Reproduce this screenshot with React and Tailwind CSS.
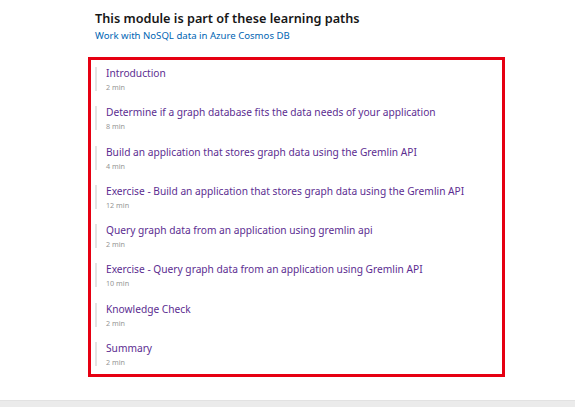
import React from 'react';

const modules = [
  { title: 'Introduction', time: '2 min' },
  { title: 'Determine if a graph database fits the data needs of your application', time: '8 min' },
  { title: 'Build an application that stores graph data using the Gremlin API', time: '4 min' },
  { title: 'Exercise - Build an application that stores graph data using the Gremlin API', time: '12 min' },
  { title: 'Query graph data from an application using gremlin api', time: '2 min' },
  { title: 'Exercise - Query graph data from an application using Gremlin API', time: '10 min' },
  { title: 'Knowledge Check', time: '2 min' },
  { title: 'Summary', time: '2 min' },
];

const App = () => {
  return (
    <div className="h-[407px] w-full bg-white flex flex-col font-['Noto_Sans',sans-serif]">
      <div className="flex-1">
        {/* Learning path header */}
        <div className="ml-[95px] pt-[10px]">
          <h2 className="text-[12.7px] leading-[17px] font-semibold text-[#171717]">
            This module is part of these learning paths
          </h2>
          <a className="block mt-[2px] text-[9.6px] leading-[13px] text-[#0065b3]">
            Work with NoSQL data in Azure Cosmos DB
          </a>
        </div>

        {/* Units list */}
        <div className="ml-[88px] mt-[15px] w-[417px] h-[320px] border-[3px] border-[#e60012] pt-[7px] pl-[4px] flex flex-col gap-[15.3px]">
          {modules.map((m) => (
            <div key={m.title} className="border-l-2 border-[#e3e3e3] pl-[9px] h-[24px]">
              <p className="text-[10.2px] leading-[13px] text-[#5c2d91] whitespace-nowrap">{m.title}</p>
              <p className="mt-[3px] text-[7.2px] leading-[8px] text-[#959595]">{m.time}</p>
            </div>
          ))}
        </div>
      </div>
      <div className="h-[7px] bg-[#ebebeb] border-t border-[#e2e2e2]" />
    </div>
  );
};

export default App;
